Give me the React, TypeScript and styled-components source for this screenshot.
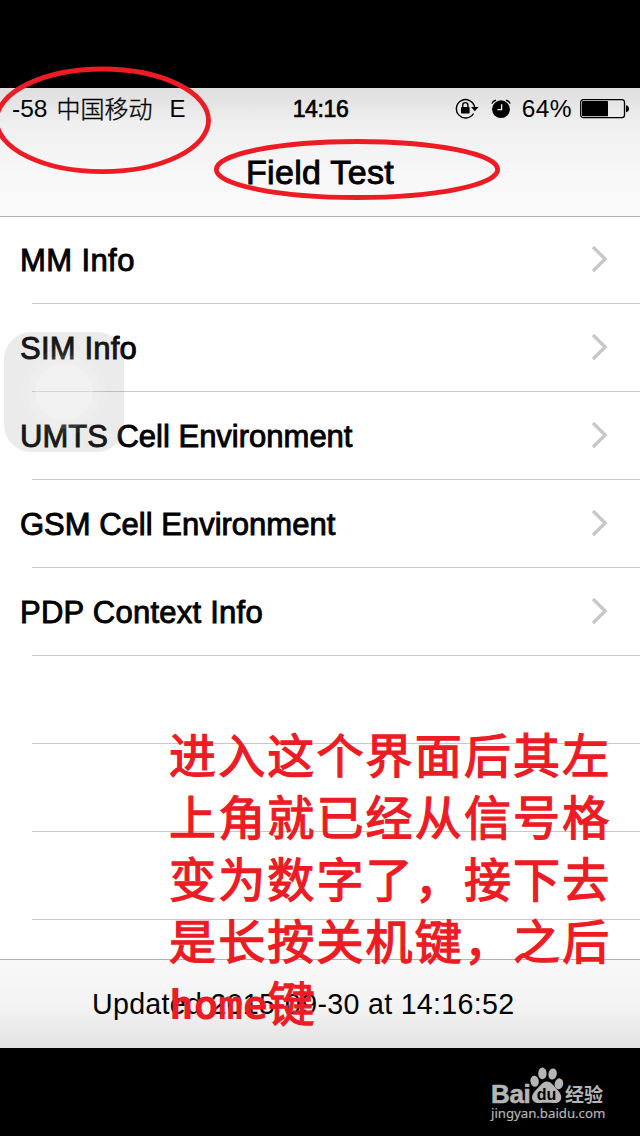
import React from 'react';
import styled, { createGlobalStyle } from 'styled-components';

const GlobalStyle = createGlobalStyle`
  * { box-sizing: border-box; }
  body { margin: 0; background: #000; font-family: "Liberation Sans", "Noto Sans CJK SC", sans-serif; color: #000; }
`;

const Screen = styled.div`
  position: relative;
  width: 640px;
  height: 1136px;
  padding-top: 88px;
  overflow: hidden;
  background: #000;
  display: flex;
  flex-direction: column;
`;

const Header = styled.header`
  height: 129px;
  flex: none;
  background: linear-gradient(#dedede, #efefef 35px, #f8f8f8 90px, #f9f9f9);
  border-bottom: 1px solid #b2b2b2;
`;

const StatusBar = styled.div`
  height: 42px;
  display: grid;
  grid-template-columns: 1fr auto 1fr;
  align-items: center;
  padding: 0 11px 0 12px;
`;

const StatusGroup = styled.div<{ $end?: boolean }>`
  display: flex;
  align-items: center;
  justify-content: ${p => (p.$end ? 'flex-end' : 'flex-start')};
`;

const StatusText = styled.span<{ $size?: number; $gap?: number; $spacing?: number; $stroke?: number }>`
  font-size: ${p => p.$size ?? 24}px;
  line-height: 42px;
  margin-left: ${p => p.$gap ?? 0}px;
  letter-spacing: ${p => p.$spacing ?? 0}px;
  -webkit-text-stroke: ${p => p.$stroke ?? 0}px #000;
  white-space: nowrap;
`;

const Carrier = styled(StatusText)`
  font-family: "Noto Sans CJK SC", sans-serif;
  font-weight: 300;
  line-height: 40px;
  padding-bottom: 2px;
`;

const Title = styled.h1`
  margin: 0;
  text-align: center;
  font-size: 34px;
  font-weight: 400;
  letter-spacing: 0.3px;
  line-height: 84px;
  -webkit-text-stroke: 0.9px #000;
`;

const List = styled.main`
  height: 742px;
  flex: none;
  background: #fff;
  overflow: hidden;
`;

const Row = styled.div`
  height: 88px;
  position: relative;
  display: flex;
  align-items: center;
  justify-content: space-between;
  padding: 0 31px 0 20px;
  &:first-child { height: 87px; padding-bottom: 1px; }
  &::after {
    content: "";
    position: absolute;
    left: 32px;
    right: 0;
    bottom: 0;
    height: 1px;
    background: #c8c7cc;
  }
`;

const Label = styled.span<{ $spacing: number }>`
  padding-top: 2px;
  font-size: 31px;
  letter-spacing: ${p => p.$spacing}px;
  -webkit-text-stroke: 0.9px #000;
`;

const Footer = styled.footer`
  height: 89px;
  flex: none;
  border-top: 1px solid #b2b2b2;
  background: linear-gradient(#f9f9f9, #f2f2f2 50px, #e2e2e2);
  padding-left: 92px;
  font-size: 28.6px;
  letter-spacing: 0.3px;
  line-height: 89px;
`;

const TouchButton = styled.div`
  position: absolute;
  left: 4px;
  top: 332px;
  width: 120px;
  height: 120px;
  border-radius: 27px;
  background: rgba(139, 139, 139, 0.17);
  display: grid;
  place-items: center;
`;

const TouchDot = styled.div`
  width: 58px;
  height: 58px;
  border-radius: 50%;
  background: rgba(255, 255, 255, 0.38);
  box-shadow: 0 0 0 8px rgba(255, 255, 255, 0.1), 0 0 0 14px rgba(255, 255, 255, 0.06);
`;

const Marks = styled.svg`
  position: absolute;
  left: 0;
  top: 60px;
`;

const Note = styled.p`
  position: absolute;
  left: 169px;
  top: 722px;
  margin: 0;
  color: #ed1c24;
  font-family: "Noto Sans CJK SC", sans-serif;
  font-size: 47px;
  font-weight: 400;
  letter-spacing: 2.15px;
  line-height: 62px;
  white-space: nowrap;
  -webkit-text-stroke: 1.3px #ed1c24;
`;

const NoteLine = styled.span`
  display: block;
  height: 62px;
`;

const NoteLatin = styled.span`
  font-family: "DejaVu Sans Mono", monospace;
  font-weight: 700;
  font-size: 41px;
  letter-spacing: 0;
  line-height: 1;
  vertical-align: 2px;
  -webkit-text-stroke: 0;
`;

const Watermark = styled.div`
  position: absolute;
  left: 491px;
  top: 1066px;
  width: 120px;
  color: #b5b5b5;
`;

const Brand = styled.div`
  display: flex;
  align-items: flex-end;
  height: 38px;
`;

const BrandLatin = styled.span`
  width: 39px;
  font-size: 26px;
  font-weight: 700;
  line-height: 24px;
  height: 22px;
  letter-spacing: -0.4px;
  -webkit-text-stroke: 0.6px #b5b5b5;
`;

const BrandHan = styled.span`
  font-family: "Noto Sans CJK SC", sans-serif;
  font-size: 19px;
  font-weight: 700;
  line-height: 20px;
  margin-left: 1px;
  padding-bottom: 0;
`;

const Site = styled.div`
  font-family: "Noto Sans", sans-serif;
  font-size: 13.2px;
  line-height: 19px;
  -webkit-text-stroke: 0.2px #b5b5b5;
`;

const rows: { label: string; spacing: number }[] = [
  { label: 'MM Info', spacing: 0.4 },
  { label: 'SIM Info', spacing: 0.2 },
  { label: 'UMTS Cell Environment', spacing: 0 },
  { label: 'GSM Cell Environment', spacing: 0 },
  { label: 'PDP Context Info', spacing: 0.25 },
];

const noteLines = ['进入这个界面后其左', '上角就已经从信号格', '变为数字了，接下去', '是长按关机键，之后'];

const Chevron = () => (
  <svg width="18" height="28" viewBox="0 0 18 28" fill="none" stroke="#c7c7cc" strokeWidth="3.4">
    <path d="M2 1 L14.2 13 L2 25" />
  </svg>
);

const LockIcon = () => (
  <svg width="25" height="22" viewBox="0 0 25 22" fill="none" stroke="#000" strokeWidth="1.4">
    <path d="M18.5 15.5 A9.2 9.2 0 1 1 19.6 9" />
    <path d="M16 9 H23.5 L19.8 13.2 Z" fill="#000" stroke="none" />
    <rect x="6" y="9" width="8.6" height="6.4" rx="0.7" fill="#000" stroke="none" />
    <path d="M7.7 9.2 V7.2 a2.6 2.6 0 0 1 5.2 0 V9.2" />
  </svg>
);

const AlarmIcon = () => (
  <svg width="20" height="21" viewBox="0 0 20 21" fill="none" stroke="#000" strokeWidth="1.4">
    <circle cx="10" cy="10.2" r="8.9" fill="#000" stroke="none" />
    <path d="M0.9 4.6 Q1.8 1.9 5 1.2 M19.1 4.6 Q18.2 1.9 15 1.2" />
    <path d="M10.6 5.2 V10.6 H6.4" stroke="#eee" />
  </svg>
);

const BatteryIcon = () => (
  <svg width="49" height="20" viewBox="0 0 49 20">
    <rect x="0.7" y="0.6" width="43.8" height="18" rx="2.6" fill="none" stroke="#000" strokeWidth="1.3" />
    <rect x="2" y="2" width="26" height="15.2" rx="0.8" />
    <path d="M46 6.2 Q49 7 49 9.7 Q49 12.4 46 13.2 Z" />
  </svg>
);

const Paw = () => (
  <svg width="34" height="38" viewBox="0 0 34 38" fill="#b5b5b5">
    <ellipse cx="4.6" cy="15.2" rx="4.2" ry="5.5" transform="rotate(-8 4.6 15.2)" />
    <ellipse cx="12.4" cy="7.4" rx="4.2" ry="5.8" />
    <ellipse cx="22.6" cy="8" rx="4.2" ry="5.6" transform="rotate(12 22.6 8)" />
    <ellipse cx="28.9" cy="17.8" rx="4.2" ry="5.5" transform="rotate(12 28.9 17.8)" />
    <path d="M17 15.5 C22 15.5 24 21 28 24.5 C34 31 31 37.5 24 37 C20 36.5 13 36.5 10 37 C2 37.5 -0.5 31 5 25 C9 21.500 12 15.500 17 15.500 Z" />
    <text x="16.500" y="34" textAnchor="middle" fontFamily="Liberation Sans" fontWeight="700" fontSize="16" fill="#000">du</text>
  </svg>
);

const Spacer = styled.span<{ $width: number }>`
  width: ${p => p.$width}px;
`;

export default function App() {
  return (
    <Screen>
      <GlobalStyle />
      <Header>
        <StatusBar>
          <StatusGroup>
            <StatusText $size={24.5}>-58</StatusText>
            <Carrier $gap={9} $stroke={0.35}>中国移动</Carrier>
            <StatusText $gap={17}>E</StatusText>
          </StatusGroup>
          <StatusText $size={23} $spacing={-0.4} $stroke={0.7}>14:16</StatusText>
          <StatusGroup $end>
            <LockIcon />
            <Spacer $width={11} />
            <AlarmIcon />
            <StatusText $gap={11} $size={24.5} $spacing={0.4}>64%</StatusText>
            <Spacer $width={8} />
            <BatteryIcon />
          </StatusGroup>
        </StatusBar>
        <Title>Field Test</Title>
      </Header>
      <List>
        {rows.map(r => (
          <Row key={r.label}>
            <Label $spacing={r.spacing}>{r.label}</Label>
            <Chevron />
          </Row>
        ))}
        <Row />
        <Row />
        <Row />
      </List>
      <Footer>Updated 2015-09-30 at 14:16:52</Footer>
      <TouchButton><TouchDot /></TouchButton>
      <Marks width="640" height="160" viewBox="0 60 640 160" fill="none" stroke="#ed1c24" strokeWidth="4.8">
        <ellipse cx="102.5" cy="120.3" rx="106" ry="51.3" />
        <ellipse cx="357" cy="169.5" rx="140.7" ry="28" />
      </Marks>
      <Note>
        {noteLines.map(l => <NoteLine key={l}>{l}</NoteLine>)}
        <NoteLine><NoteLatin>home</NoteLatin>键</NoteLine>
      </Note>
      <Watermark>
        <Brand>
          <BrandLatin>Bai</BrandLatin>
          <Paw />
          <BrandHan>经验</BrandHan>
        </Brand>
        <Site>jingyan.baidu.com</Site>
      </Watermark>
    </Screen>
  );
}
